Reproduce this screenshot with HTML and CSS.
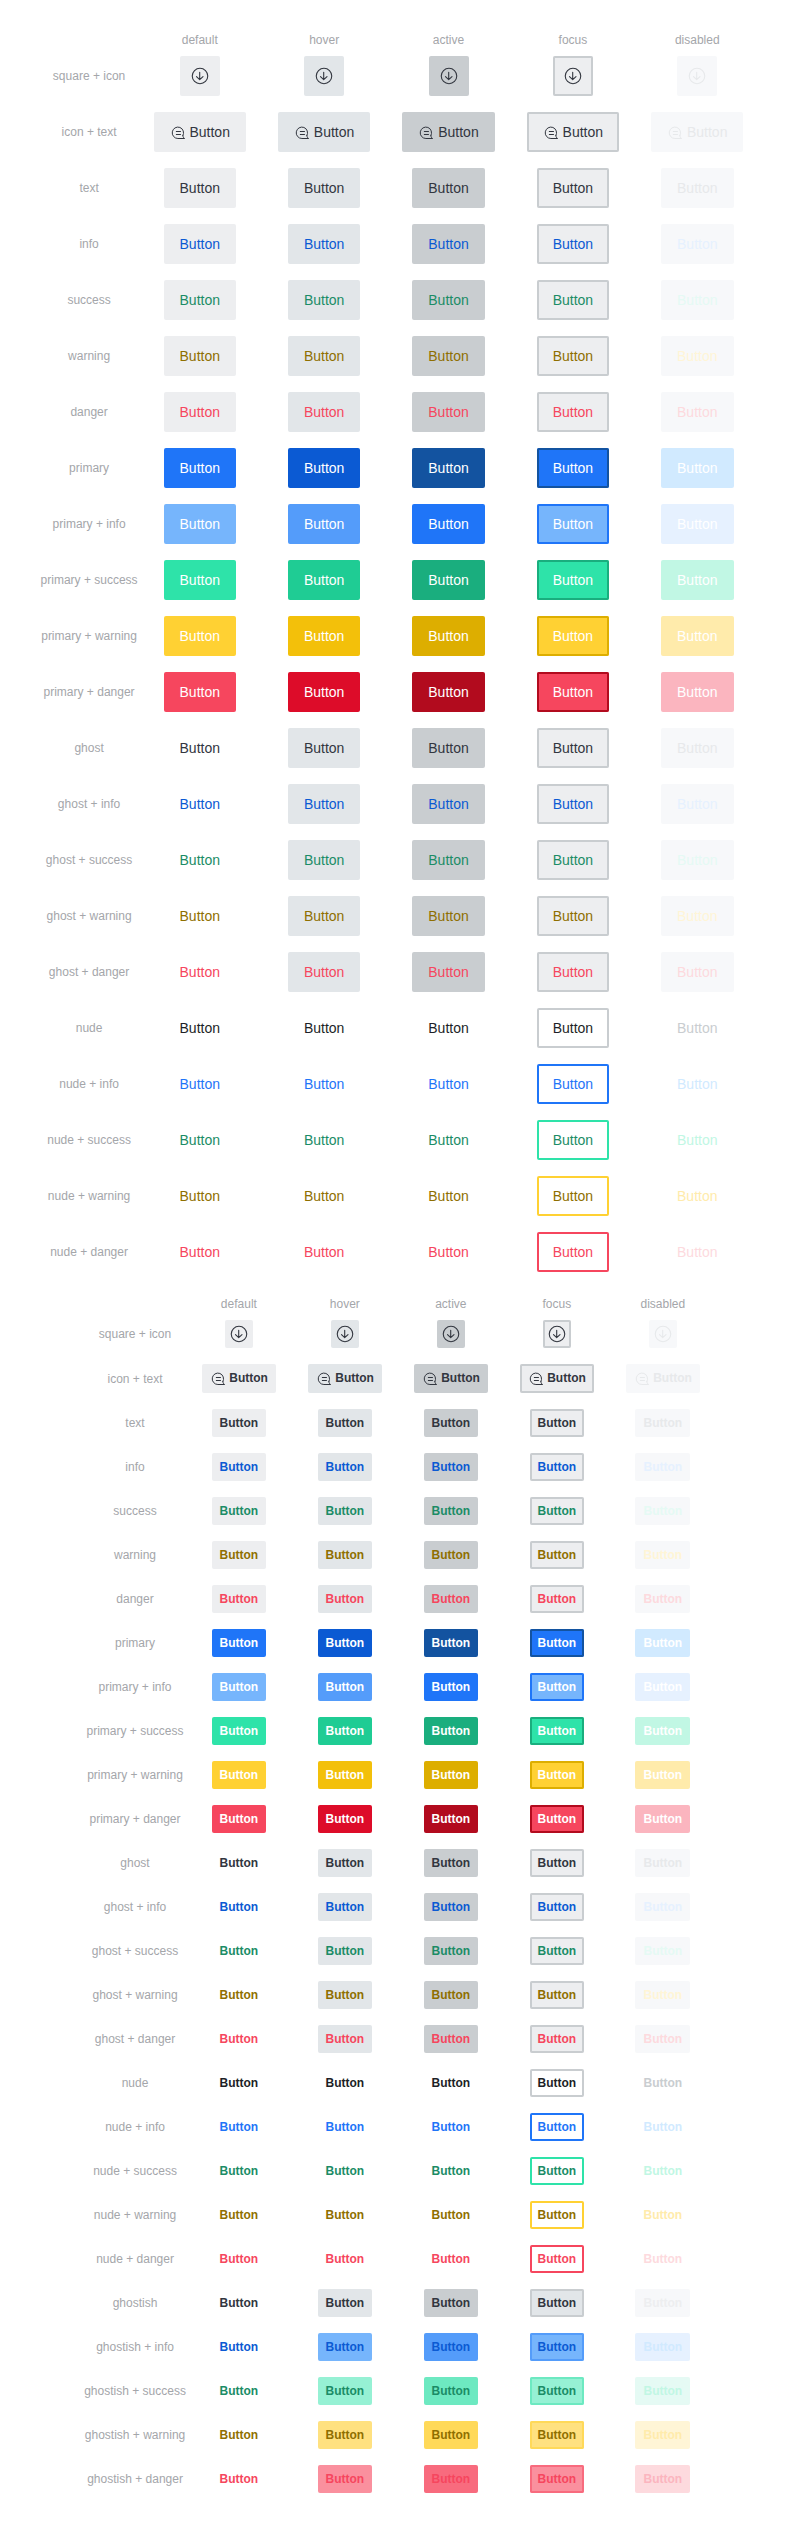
FILE: index.html
```html
<!DOCTYPE html>
<html lang="en">
<head>
<meta charset="utf-8">
<title>Buttons</title>
<link rel="stylesheet" href="styles.css">
</head>
<body>
<svg class="sprite" aria-hidden="true">
  <symbol id="icon-down" viewBox="0 0 20 20">
    <circle cx="10" cy="10" r="7.75"/>
    <path d="M9.7 6.2v7.3M6.5 10.6l3.200 3 3.300-3"/>
  </symbol>
  <symbol id="icon-chat" viewBox="0 0 16 16">
    <path d="M12.900 10.600A5.700 5.700 0 1 0 7.900 13.500H14.600C13.500 12.800 12.900 11.900 12.900 10.600M6.300 6.500h4.200M6.300 9.500h4.200"/>
  </symbol>
</svg>
<main class="page">
  <section class="matrix matrix-large" id="large"></section>
  <section class="matrix matrix-small" id="small"></section>
</main>
<script src="buttons.js"></script>
</body>
</html>
```
FILE: styles.css
```css
body {
  margin: 0;
  background: #fff;
  font-family: "Liberation Sans", Arial, sans-serif;
}

.sprite { display: none; }

.page {
  display: flex;
  flex-direction: column;
  align-items: center;
  gap: 24px;
  padding: 32px 0;
}

.matrix {
  display: grid;
  grid-template-columns: repeat(6, auto);
  justify-items: center;
  align-items: center;
  row-gap: 16px;
}

.matrix-large { grid-template-rows: 8px repeat(22, 40px); }
.matrix-small { grid-template-rows: 8px 28px 29px repeat(25, 28px); }

.caption {
  color: #a4a6aa;
  font-size: 12px;
  line-height: 16px;
  white-space: nowrap;
}

.state { align-self: start; }
.cell { display: flex; padding: 0 16px; }

.btn {
  box-sizing: border-box;
  display: block;
  height: 40px;
  padding: 0 16px;
  border: 0;
  border-radius: 2px;
  background: var(--bg);
  color: var(--fg);
  font: 400 14px/40px "Liberation Sans", Arial, sans-serif;
  white-space: nowrap;
}

.matrix-small .btn {
  height: 28px;
  padding: 0 8px;
  font-size: 12px;
  font-weight: 700;
  line-height: 28px;
}

.matrix-small .btn-labelled {
  height: 29px;
  padding-bottom: 1px;
}

.btn.btn-square {
  display: grid;
  place-items: center;
  width: 40px;
  padding: 0;
}

.matrix-small .btn.btn-square { width: 28px; }
.is-focus { box-shadow: inset 0 0 0 2px var(--ring); }

.icon {
  fill: none;
  stroke: currentColor;
  stroke-linecap: round;
  stroke-linejoin: round;
}

.icon-large { width: 20px; height: 20px; stroke-width: 1.1; }
.icon-small { width: 16px; height: 16px; stroke-width: 1; vertical-align: -4px; }
.matrix-small .icon-small { vertical-align: -5px; }

/* Neutral surfaces */
.soft, .ghost { --bg: #edeef0; --fg: #32363f; --ring: #c9cdd0; }
.ghost.is-default { --bg: transparent; }
.soft.is-hover, .ghost.is-hover { --bg: #e2e6e9; }
.soft.is-active, .ghost.is-active { --bg: #c9cdd0; }
.info { --fg: #0b5ad3; }
.success { --fg: #1b8c66; }
.warning { --fg: #8f6f00; }
.danger { --fg: #f6465e; }
.soft.is-disabled, .ghost.is-disabled { --bg: #f7f8fa; --fg: #e7e9eb; }
.btn.is-disabled.info { --fg: #e6f1ff; }
.btn.is-disabled.success { --fg: #e5faf4; }
.btn.is-disabled.warning { --fg: #fff5d6; }
.btn.is-disabled.danger { --fg: #fddade; }

/* Solid surfaces */
.primary { --bg: #1f75f8; --fg: #fff; --ring: #1353a0; }
.primary.is-hover { --bg: #0b5ad3; }
.primary.is-active { --bg: #1353a0; }
.btn.primary.is-disabled { --bg: #d1eaff; }
.primary.info { --bg: #76b5fc; --fg: #fff; --ring: #1f75f8; }
.primary.info.is-hover { --bg: #549cfa; }
.primary.info.is-active { --bg: #1f75f8; }
.btn.primary.info.is-disabled { --bg: #e6f1ff; --fg: #fff; }
.primary.success { --bg: #2ee3a9; --fg: #fff; --ring: #1aae7e; }
.primary.success.is-hover { --bg: #1fcc94; }
.primary.success.is-active { --bg: #1aae7e; }
.btn.primary.success.is-disabled { --bg: #c1f7e4; --fg: #fff; }
.primary.warning { --bg: #ffd133; --fg: #fff; --ring: #ddae00; }
.primary.warning.is-hover { --bg: #f3c00a; }
.primary.warning.is-active { --bg: #ddae00; }
.btn.primary.warning.is-disabled { --bg: #ffebab; --fg: #fff; }
.primary.danger { --bg: #f6465e; --fg: #fff; --ring: #b20b1e; }
.primary.danger.is-hover { --bg: #dd0c29; }
.primary.danger.is-active { --bg: #b20b1e; }
.btn.primary.danger.is-disabled { --bg: #fbb5bf; --fg: #fff; }

/* Text only, outlined on focus */
.nude { --bg: transparent; --fg: #1d1f27; --ring: #c9cdd0; }
.nude.is-disabled { --fg: #c9cdd0; }
.nude.info { --fg: #1f75f8; --ring: #1f75f8; }
.btn.nude.info.is-disabled { --fg: #d1eaff; }
.nude.success { --fg: #1b8c66; --ring: #2ee3a9; }
.btn.nude.success.is-disabled { --fg: #c1f7e4; }
.nude.warning { --fg: #8f6f00; --ring: #ffd133; }
.btn.nude.warning.is-disabled { --fg: #ffebab; }
.nude.danger { --fg: #f6465e; --ring: #f6465e; }
.btn.nude.danger.is-disabled { --fg: #fddade; }

/* Transparent at rest, tinted on interaction */
.ghostish { --bg: #e2e6e9; --fg: #32363f; --ring: #c9cdd0; }
.ghostish.is-active { --bg: #c9cdd0; }
.ghostish.is-disabled { --bg: #f7f8fa; --fg: #edeef0; }
.ghostish.info { --bg: #76b5fc; --fg: #0b5ad3; --ring: #549cfa; }
.ghostish.info.is-active { --bg: #549cfa; }
.btn.ghostish.info.is-disabled { --bg: #e6f1ff; --fg: #d1eaff; }
.ghostish.success { --bg: #96f1d4; --fg: #1b8c66; --ring: #6de9c1; }
.ghostish.success.is-active { --bg: #6de9c1; }
.btn.ghostish.success.is-disabled { --bg: #e5faf4; --fg: #c1f7e4; }
.ghostish.warning { --bg: #ffe180; --fg: #8f6f00; --ring: #ffd959; }
.ghostish.warning.is-active { --bg: #ffd959; }
.btn.ghostish.warning.is-disabled { --bg: #fff5d6; --fg: #ffebab; }
.ghostish.danger { --bg: #fa909e; --fg: #f6465e; --ring: #f86b7e; }
.ghostish.danger.is-active { --bg: #f86b7e; }
.btn.ghostish.danger.is-disabled { --bg: #fddade; --fg: #fbb5bf; }
.btn.ghostish.is-default { --bg: transparent; }
```
FILE: buttons.js
```js
const states = ['default', 'hover', 'active', 'focus', 'disabled'];
const tones = ['info', 'success', 'warning', 'danger'];

const icon = (name, size) => `<svg class="icon ${size}"><use href="#${name}"/></svg>`;

const family = name => [
  { label: name, style: name },
  ...tones.map(tone => ({ label: `${name} + ${tone}`, style: `${name} ${tone}` })),
];

const base = [
  { label: 'square + icon', style: 'soft btn-square', content: icon('icon-down', 'icon-large') },
  { label: 'icon + text', style: 'soft btn-labelled', content: `${icon('icon-chat', 'icon-small')} Button` },
  { label: 'text', style: 'soft' },
  ...tones.map(tone => ({ label: tone, style: `soft ${tone}` })),
  ...family('primary'),
  ...family('ghost'),
  ...family('nude'),
];

function render(id, rows) {
  const head = '<span></span>' + states.map(s => `<span class="caption state">${s}</span>`).join('');
  const body = rows.map(({ label, style, content = 'Button' }) =>
    `<span class="caption">${label}</span>` + states.map(s =>
      `<div class="cell"><button type="button" class="btn ${style} is-${s}">${content}</button></div>`
    ).join('')
  ).join('');
  document.getElementById(id).innerHTML = head + body;
}

render('large', base);
render('small', [...base, ...family('ghostish')]);
```
